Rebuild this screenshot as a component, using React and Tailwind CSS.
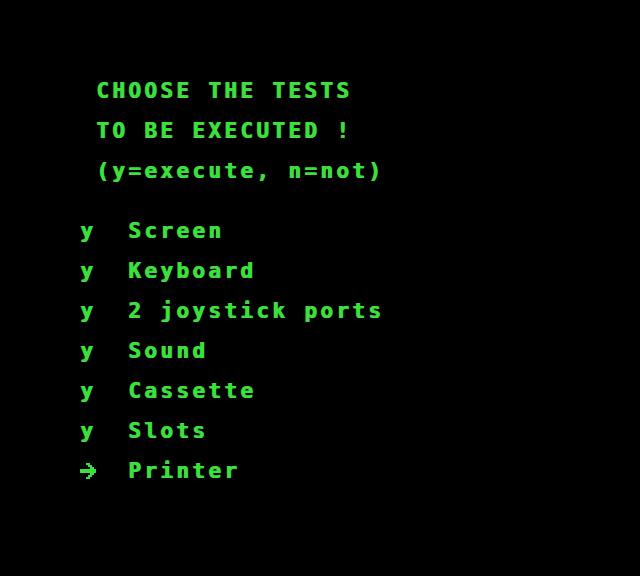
const green = "text-[#3ce03c]";

const tests = ["Screen", "Keyboard", "2 joystick ports", "Sound", "Cassette", "Slots"];

function Arrow() {
  // 8x8 pixel arrow, each cell 2px
  const cells = [
    [3, 0], [4, 0],
    [4, 1], [5, 1],
    [5, 2], [6, 2],
    [0, 3], [1, 3], [2, 3], [3, 3], [4, 3], [5, 3], [6, 3], [7, 3],
    [0, 4], [1, 4], [2, 4], [3, 4], [4, 4], [5, 4], [6, 4], [7, 4],
    [5, 5], [6, 5],
    [4, 6], [5, 6],
    [3, 7], [4, 7],
  ];
  return (
    <svg width="16" height="16" viewBox="0 0 16 16" className="shrink-0" shapeRendering="crispEdges">
      {cells.map(([x, y]) => (
        <rect key={`${x}-${y}`} x={x * 2} y={y * 2} width="2" height="2" fill="#3ce03c" />
      ))}
    </svg>
  );
}

function Line({ children, className = "" }) {
  return <div className={`h-10 leading-[40px] whitespace-pre ${className}`}>{children}</div>;
}

export default function App() {
  return (
    <main
      className={`h-[576px] w-[640px] overflow-hidden bg-black pl-20 pt-[71px] font-['DejaVu_Sans_Mono',monospace] text-[21px] font-bold tracking-[3.36px] [text-shadow:1px_0_0_#3ce03c] ${green}`}
    >
      <Line>{" CHOOSE THE TESTS"}</Line>
      <Line>{" TO BE EXECUTED !"}</Line>
      <Line>{" (y=execute, n=not)"}</Line>

      <div className="mt-5">
        {tests.map((t) => (
          <Line key={t}>{`y  ${t}`}</Line>
        ))}
        <div className="flex h-10 items-center">
          <Arrow />
          <span className="whitespace-pre leading-[40px]">{"  Printer"}</span>
        </div>
      </div>
    </main>
  );
}
